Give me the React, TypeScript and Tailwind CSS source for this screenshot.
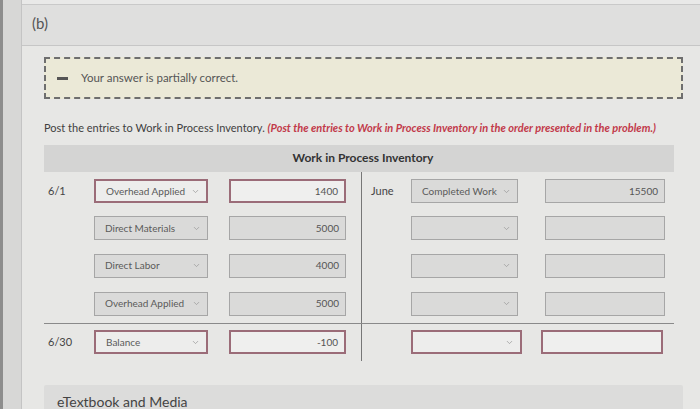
import { ChevronDown } from "lucide-react";

type Cell = { label?: string; value?: string; bad?: boolean };

function Select({ label, bad, w }: { label?: string; bad?: boolean; w: string }) {
  return (
    <div
      className={`${w} h-[24px] flex items-center justify-between pl-[10px] pr-[6px] text-[10px] text-[#5a5a5a] ${
        bad ? "border-2 border-[#9b6c78] bg-[#ededec]" : "border border-[#a6a6a6] bg-[#dadad9]"
      }`}
    >
      <span>{label}</span>
      <ChevronDown className="w-[9px] h-[9px] text-[#9a9a9a]" strokeWidth={2} />
    </div>
  );
}

function Amount({ value, bad, w }: { value?: string; bad?: boolean; w: string }) {
  return (
    <div
      className={`${w} h-[24px] flex items-center justify-end pr-[6px] text-[10px] text-[#555] ${
        bad ? "border-2 border-[#9b6c78] bg-[#efefee]" : "border border-[#a6a6a6] bg-[#dadad9]"
      }`}
    >
      {value}
    </div>
  );
}

const rows: { date?: string; left: Cell; rdate?: string; right: Cell; h: string; line?: boolean }[] = [
  { date: "6/1", left: { label: "Overhead Applied", value: "1400", bad: true }, rdate: "June", right: { label: "Completed Work", value: "15500" }, h: "h-[38px] pt-[1px]" },
  { left: { label: "Direct Materials", value: "5000" }, right: {}, h: "h-[37px]" },
  { left: { label: "Direct Labor", value: "4000" }, right: {}, h: "h-[38px]" },
  { left: { label: "Overhead Applied", value: "5000" }, right: {}, h: "h-[38px]" },
  { date: "6/30", left: { label: "Balance", value: "-100", bad: true }, right: { bad: true }, h: "h-[37px]", line: true },
];

export default function App() {
  return (
    <div className="w-[700px] h-[409px] overflow-hidden flex bg-[#e7e7e5] text-[#3c3c3c]" style={{ fontFamily: "Lato, 'Open Sans', sans-serif" }}>
      <div className="w-[3px] bg-[#8d8d8d]" />
      <div className="w-[19px] bg-[#d7d7d6] border-r border-[#c4c4c4]" />
      <div className="flex-1 flex flex-col">
        <div className="h-[5px] shrink-0 bg-[#e9e9e8] border-b border-[#c9c9c9]" />
        <div className="h-[41px] shrink-0 bg-[#dfdfde] border-b border-[#c6c6c6] pl-[10px] pt-[7px] text-[15px] text-[#555]">(b)</div>
        <div className="pl-[22px] pr-[17px] pt-[11px]">
          <div className="h-[42px] border-2 border-dashed border-[#6e6e6e] bg-[#ebe9d7] flex items-center pl-[11px]">
            <div className="w-[11px] h-[3px] bg-[#555]" />
            <span className="ml-[13px] text-[11.5px] text-[#555]">Your answer is partially correct.</span>
          </div>
        </div>
        <div className="pl-[22px] mt-[21px] text-[11px] text-[#3f3f3f] whitespace-nowrap">
          Post the entries to Work in Process Inventory.{" "}
          <span className="italic font-bold text-[#c23a4a]">(Post the entries to Work in Process Inventory in the order presented in the problem.)</span>
        </div>
        <div className="ml-[22px] w-[630px] mt-[8px]">
          <div className="h-[27px] bg-[#d4d4d3] flex items-center justify-center pl-[8px] text-[12px] font-bold text-[#333]">Work in Process Inventory</div>
          {rows.map((r, i) => (
            <div key={i} className={`flex ${r.line ? "border-t border-[#8a8a8a]" : ""}`}>
              <div className={`w-[318px] ${r.h} border-r border-[#777] flex items-center pl-[4px]`}>
                <div className="w-[46px] text-[11px] text-[#444]">{r.date}</div>
                <Select label={r.left.label} bad={r.left.bad} w="w-[114px]" />
                <div className="w-[21px]" />
                <Amount value={r.left.value} bad={r.left.bad} w="w-[117px]" />
              </div>
              <div className={`flex-1 ${r.h} flex items-center pl-[9px]`}>
                <div className="w-[40px] text-[11px] text-[#444]">{r.rdate}</div>
                <Select label={r.right.label} bad={r.right.bad} w={r.right.bad ? "w-[111px]" : "w-[107px]"} />
                <div className={r.right.bad ? "w-[19px]" : "w-[27px]"} />
                <Amount value={r.right.value} bad={r.right.bad} w={r.right.bad ? "w-[122px]" : "w-[120px]"} />
              </div>
            </div>
          ))}
        </div>
        <div className="ml-[22px] mr-[17px] mt-[24px] h-[30px] shrink-0 bg-[#dcdcdb] pl-[13px] pt-[6px] text-[14px] text-[#444] rounded-t-[2px]">eTextbook and Media</div>
      </div>
    </div>
  );
}
